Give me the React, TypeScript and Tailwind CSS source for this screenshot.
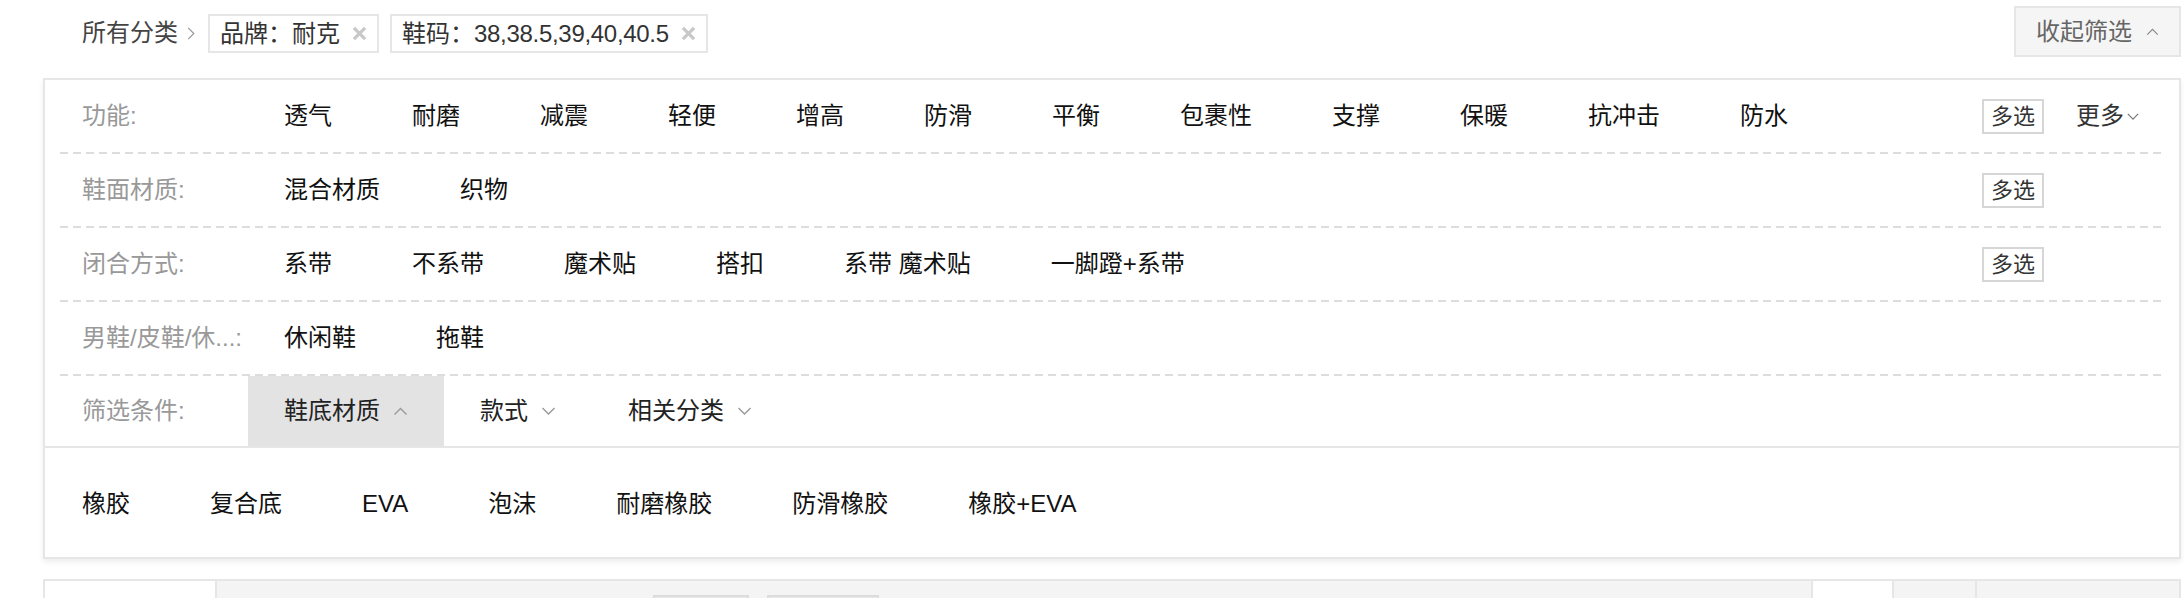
import React from "react";

const font = "font-['Liberation_Sans','Noto_Sans_CJK_SC',sans-serif]";

const rows: { label: string; items: string[]; multi?: boolean; more?: boolean }[] = [
  {
    label: "功能:",
    items: ["透气", "耐磨", "减震", "轻便", "增高", "防滑", "平衡", "包裹性", "支撑", "保暖", "抗冲击", "防水"],
    multi: true,
    more: true,
  },
  { label: "鞋面材质:", items: ["混合材质", "织物"], multi: true },
  { label: "闭合方式:", items: ["系带", "不系带", "魔术贴", "搭扣", "系带 魔术贴", "一脚蹬+系带"], multi: true },
  { label: "男鞋/皮鞋/休...:", items: ["休闲鞋", "拖鞋"] },
];

const soles = ["橡胶", "复合底", "EVA", "泡沫", "耐磨橡胶", "防滑橡胶", "橡胶+EVA"];

function Chevron({ up = false, className = "" }: { up?: boolean; className?: string }) {
  return (
    <svg viewBox="0 0 14 8" className={className} fill="none" stroke="currentColor" strokeWidth="1.4">
      {up ? <path d="M1 7.5 7 1.5l6 6" /> : <path d="M1 1l6 6 6-6" />}
    </svg>
  );
}

function CloseIcon() {
  return (
    <svg viewBox="0 0 12 12" className="ml-[12px] h-[15px] w-[15px] text-[#c8c8c8]" stroke="currentColor" strokeWidth="2.6">
      <path d="M1.5 1.5l9 9M10.5 1.5l-9 9" />
    </svg>
  );
}

function Tag({ children }: { children: React.ReactNode }) {
  return (
    <div className="mt-[14px] flex h-[39px] items-center border-2 border-[#e6e6e6] pl-[10px] pr-[10px] text-[24px] leading-none text-[#333]">
      <span>{children}</span>
      <CloseIcon />
    </div>
  );
}

function Dashed() {
  return <div className="h-[2px] bg-[repeating-linear-gradient(90deg,#dddddd_0_8px,transparent_8px_13px)]" />;
}

export default function App() {
  return (
    <div className={`min-h-screen bg-white pl-[43px] ${font}`}>
      <div className="w-[2138px]">
        {/* breadcrumb */}
        <div className="flex h-[67px] items-start">
          <span className="ml-[39px] mt-[19px] text-[24px] leading-[28px] text-[#444]">所有分类</span>
          <svg viewBox="0 0 8 14" className="ml-[9px] mt-[27px] h-[13px] w-[8px] text-[#999]" fill="none" stroke="currentColor" strokeWidth="1.3">
            <path d="M1 1l6 6-6 6" />
          </svg>
          <div className="ml-[13px]">
            <Tag>品牌：耐克</Tag>
          </div>
          <div className="ml-[11px]">
            <Tag>
              鞋码：<span className="tracking-[-0.3px]">38,38.5,39,40,40.5</span>
            </Tag>
          </div>
          <div className="ml-auto mt-[6px] flex h-[51px] items-center border-2 border-[#e6e6e6] bg-[#f5f5f5] pl-[20px] pr-[20px] text-[24px] text-[#666]">
            <span>收起筛选</span>
            <Chevron up className="ml-[14px] h-[7px] w-[13px] text-[#888]" />
          </div>
        </div>

        {/* filter panel */}
        <div className="mt-[11px] border-2 border-[#e6e6e6] bg-white shadow-[0_3px_6px_rgba(0,0,0,0.07)]">
          <div className="px-[15px]">
            {rows.map((row) => (
              <div key={row.label}>
                <div className="flex h-[72px] items-center pl-[22px]">
                  <div className="w-[202px] shrink-0 text-[24px] text-[#999]">{row.label}</div>
                  <div className="flex flex-1 items-center text-[24px] text-[#111]">
                    {row.items.map((item) => (
                      <span key={item} className="mr-[80px] whitespace-pre">
                        {item}
                      </span>
                    ))}
                  </div>
                  <div className="flex w-[182px] shrink-0 items-center">
                    {row.multi && (
                      <span className="border-2 border-[#d6d6d6] px-[7px] text-[22px] leading-[31px] text-[#333]">多选</span>
                    )}
                    {row.more && (
                      <span className="ml-[32px] flex items-center text-[24px] text-[#333]">
                        更多
                        <Chevron className="ml-[3px] h-[7px] w-[12px] text-[#777]" />
                      </span>
                    )}
                  </div>
                </div>
                <Dashed />
              </div>
            ))}
          </div>

          {/* tabs row */}
          <div className="flex h-[72px] items-stretch border-b-2 border-[#e6e6e6] pl-[37px]">
            <div className="flex w-[166px] shrink-0 items-center text-[24px] text-[#999]">筛选条件:</div>
            <div className="flex items-center bg-[#e3e3e3] px-[36px] text-[24px] text-[#222]">
              鞋底材质
              <Chevron up className="ml-[13px] h-[8px] w-[15px] text-[#999]" />
            </div>
            <div className="flex items-center px-[36px] text-[24px] text-[#222]">
              款式
              <Chevron className="ml-[13px] h-[8px] w-[15px] text-[#999]" />
            </div>
            <div className="flex items-center px-[36px] text-[24px] text-[#222]">
              相关分类
              <Chevron className="ml-[13px] h-[8px] w-[15px] text-[#999]" />
            </div>
          </div>

          {/* sole materials */}
          <div className="flex h-[109px] items-center pl-[37px] pt-[3px] text-[24px] text-[#111]">
            {soles.map((s) => (
              <span key={s} className="mr-[80px]">
                {s}
              </span>
            ))}
          </div>
        </div>

        {/* sort bar */}
        <div className="mt-[20px] flex h-[40px] border-x-2 border-t-2 border-[#e6e6e6]">
          <div className="w-[170px] bg-white" />
          <div className="flex flex-1 items-start border-l-2 border-[#e6e6e6] bg-[#f4f4f4] pl-[436px] pt-[14px]">
            <div className="h-[30px] w-[96px] border-2 border-[#dcdcdc] bg-[#e9e9e9]" />
            <div className="ml-[18px] h-[30px] w-[112px] border-2 border-[#dcdcdc] bg-[#e9e9e9]" />
          </div>
          <div className="w-[81px] border-l-2 border-[#e6e6e6] bg-white" />
          <div className="w-[83px] border-l-2 border-[#e6e6e6] bg-[#f4f4f4]" />
          <div className="w-[204px] border-l-2 border-[#e6e6e6] bg-[#f4f4f4]" />
        </div>
      </div>
    </div>
  );
}
